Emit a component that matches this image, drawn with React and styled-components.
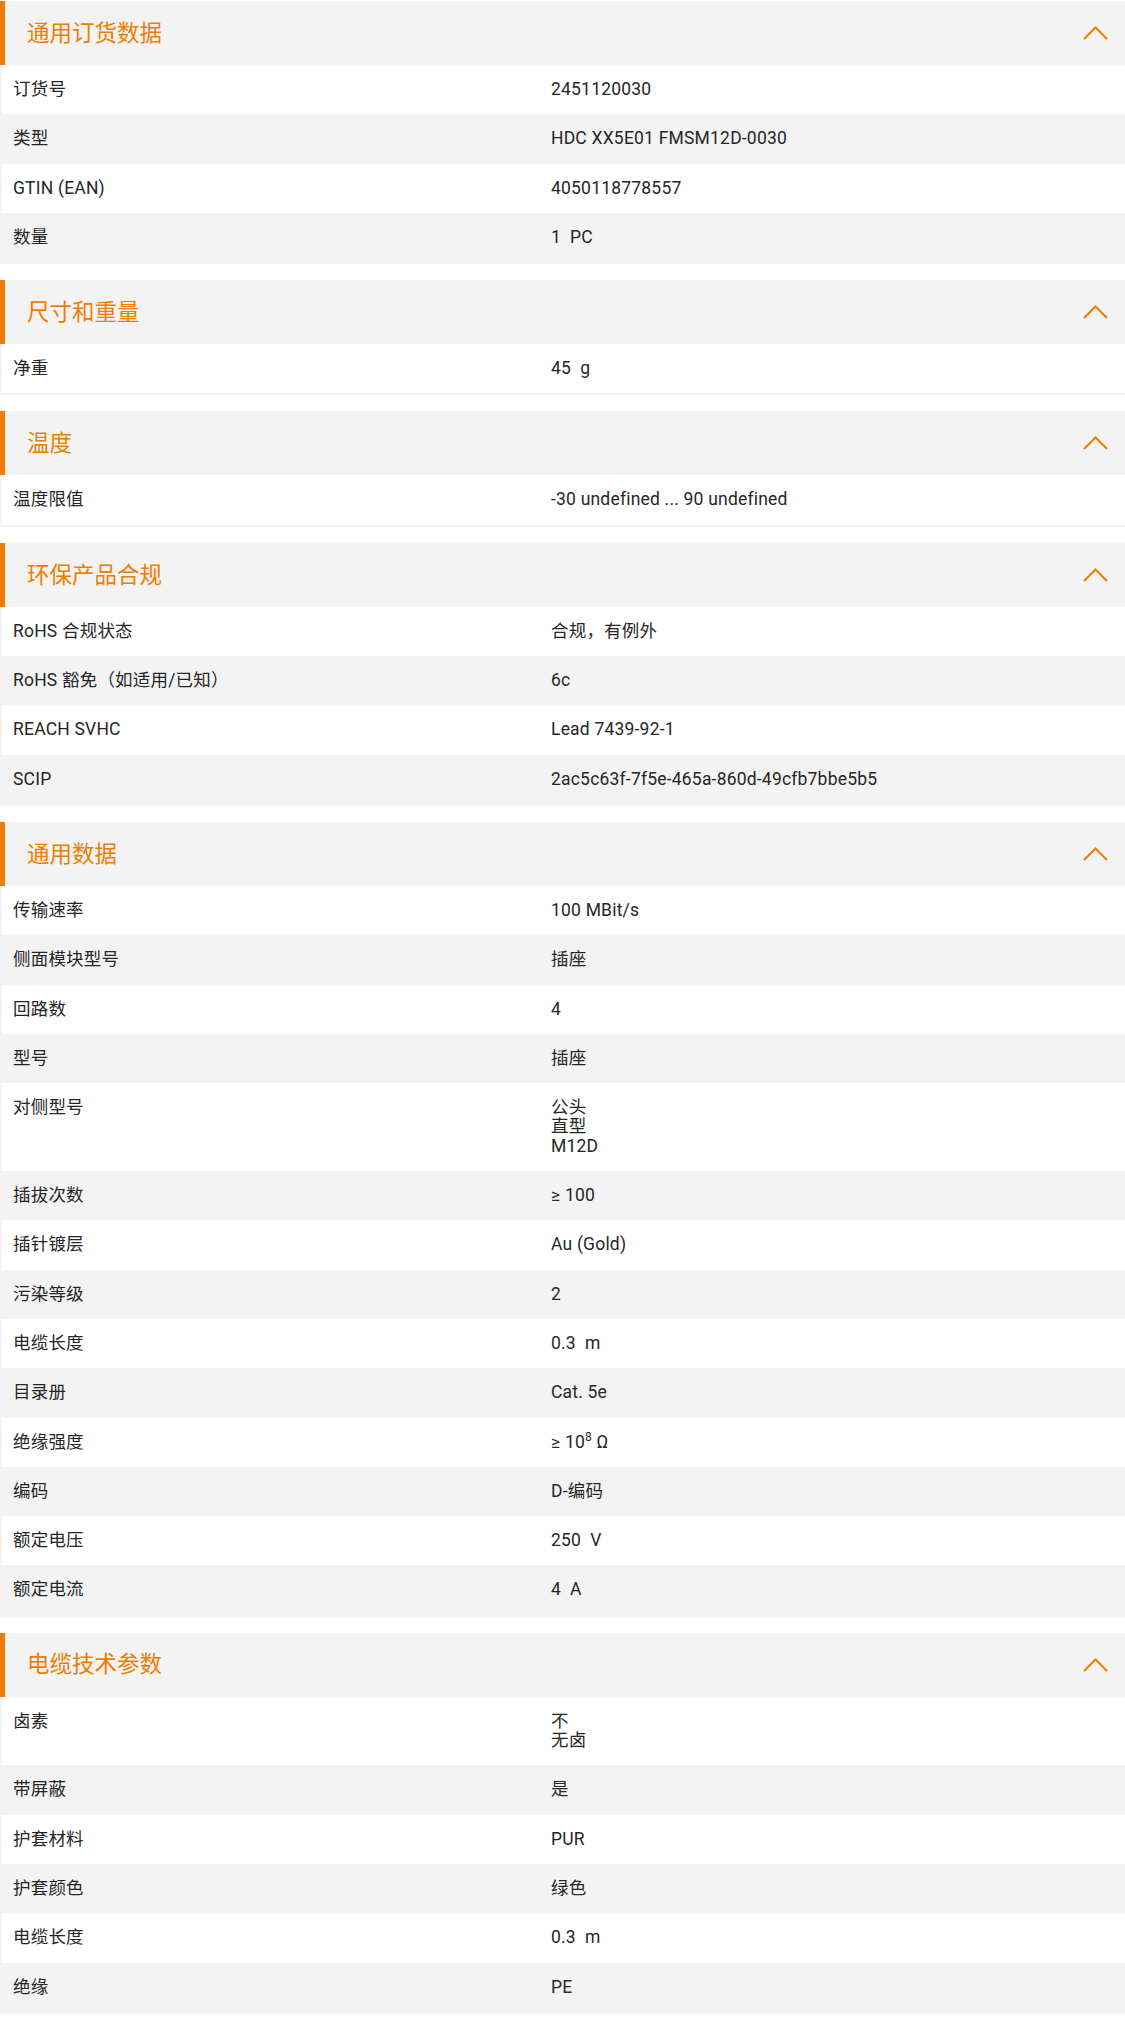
import React from "react";
import styled, { createGlobalStyle } from "styled-components";

const GlobalStyle = createGlobalStyle`
  body {
    margin: 0;
    background: #ffffff;
    font-family: Roboto, "Noto Sans CJK SC", sans-serif;
    color: #262626;
  }
`;

const Page = styled.div`
  display: flex;
  flex-direction: column;
  gap: 16px;
  padding: 1px 0 12px 0;
`;

const Section = styled.section`
  background: #f3f3f3;
  padding-bottom: 2px;
`;

const Header = styled.div`
  height: 64px;
  display: flex;
  align-items: center;
  justify-content: space-between;
  border-left: 5px solid #f07d00;
  padding: 0 17px 0 22px;
  background: #f3f3f3;
`;

const Title = styled.h2`
  margin: 0;
  font-size: 22.5px;
  font-weight: 400;
  line-height: 1;
  color: #f07d00;
`;

const Row = styled.div`
  display: grid;
  grid-template-columns: 538px 1fr;
  margin-left: 2px;
  padding: 15px 11px;
  background: ${(props) => (props.striped ? "#f3f3f3" : "#ffffff")};
  font-size: 17.5px;
  line-height: 19.3px;
  letter-spacing: 0.2px;
`;

const Label = styled.div`
  align-self: start;
`;

const Value = styled.div`
  white-space: pre-wrap;
  font-variant-numeric: tabular-nums;
  sup {
    font-size: 12px;
    line-height: 0;
  }
`;

const Chevron = () => (
  <svg width="25" height="14" viewBox="0 0 25 14" fill="none">
    <polyline
      points="1,13 12.5,1.5 24,13"
      stroke="#f07d00"
      strokeWidth="2"
      fill="none"
    />
  </svg>
);

const sections = [
  {
    title: "通用订货数据",
    rows: [
      ["订货号", "2451120030"],
      ["类型", "HDC XX5E01 FMSM12D-0030"],
      ["GTIN (EAN)", "4050118778557"],
      ["数量", "1  PC"],
    ],
  },
  {
    title: "尺寸和重量",
    rows: [["净重", "45  g"]],
  },
  {
    title: "温度",
    rows: [["温度限值", "-30 undefined ... 90 undefined"]],
  },
  {
    title: "环保产品合规",
    rows: [
      ["RoHS 合规状态", "合规，有例外"],
      ["RoHS 豁免（如适用/已知）", "6c"],
      ["REACH SVHC", "Lead 7439-92-1"],
      ["SCIP", "2ac5c63f-7f5e-465a-860d-49cfb7bbe5b5"],
    ],
  },
  {
    title: "通用数据",
    rows: [
      ["传输速率", "100 MBit/s"],
      ["侧面模块型号", "插座"],
      ["回路数", "4"],
      ["型号", "插座"],
      ["对侧型号", "公头\n直型\nM12D"],
      ["插拔次数", "≥ 100"],
      ["插针镀层", "Au (Gold)"],
      ["污染等级", "2"],
      ["电缆长度", "0.3  m"],
      ["目录册", "Cat. 5e"],
      [
        "绝缘强度",
        <>
          ≥ 10<sup>8</sup> Ω
        </>,
      ],
      ["编码", "D-编码"],
      ["额定电压", "250  V"],
      ["额定电流", "4  A"],
    ],
  },
  {
    title: "电缆技术参数",
    rows: [
      ["卤素", "不\n无卤"],
      ["带屏蔽", "是"],
      ["护套材料", "PUR"],
      ["护套颜色", "绿色"],
      ["电缆长度", "0.3  m"],
      ["绝缘", "PE"],
    ],
  },
];

export default function App() {
  return (
    <>
      <GlobalStyle />
      <Page>
        {sections.map((section) => (
          <Section key={section.title}>
            <Header>
              <Title>{section.title}</Title>
              <Chevron />
            </Header>
            {section.rows.map(([label, value], index) => (
              <Row key={index} striped={index % 2 === 1}>
                <Label>{label}</Label>
                <Value>{value}</Value>
              </Row>
            ))}
          </Section>
        ))}
      </Page>
    </>
  );
}
